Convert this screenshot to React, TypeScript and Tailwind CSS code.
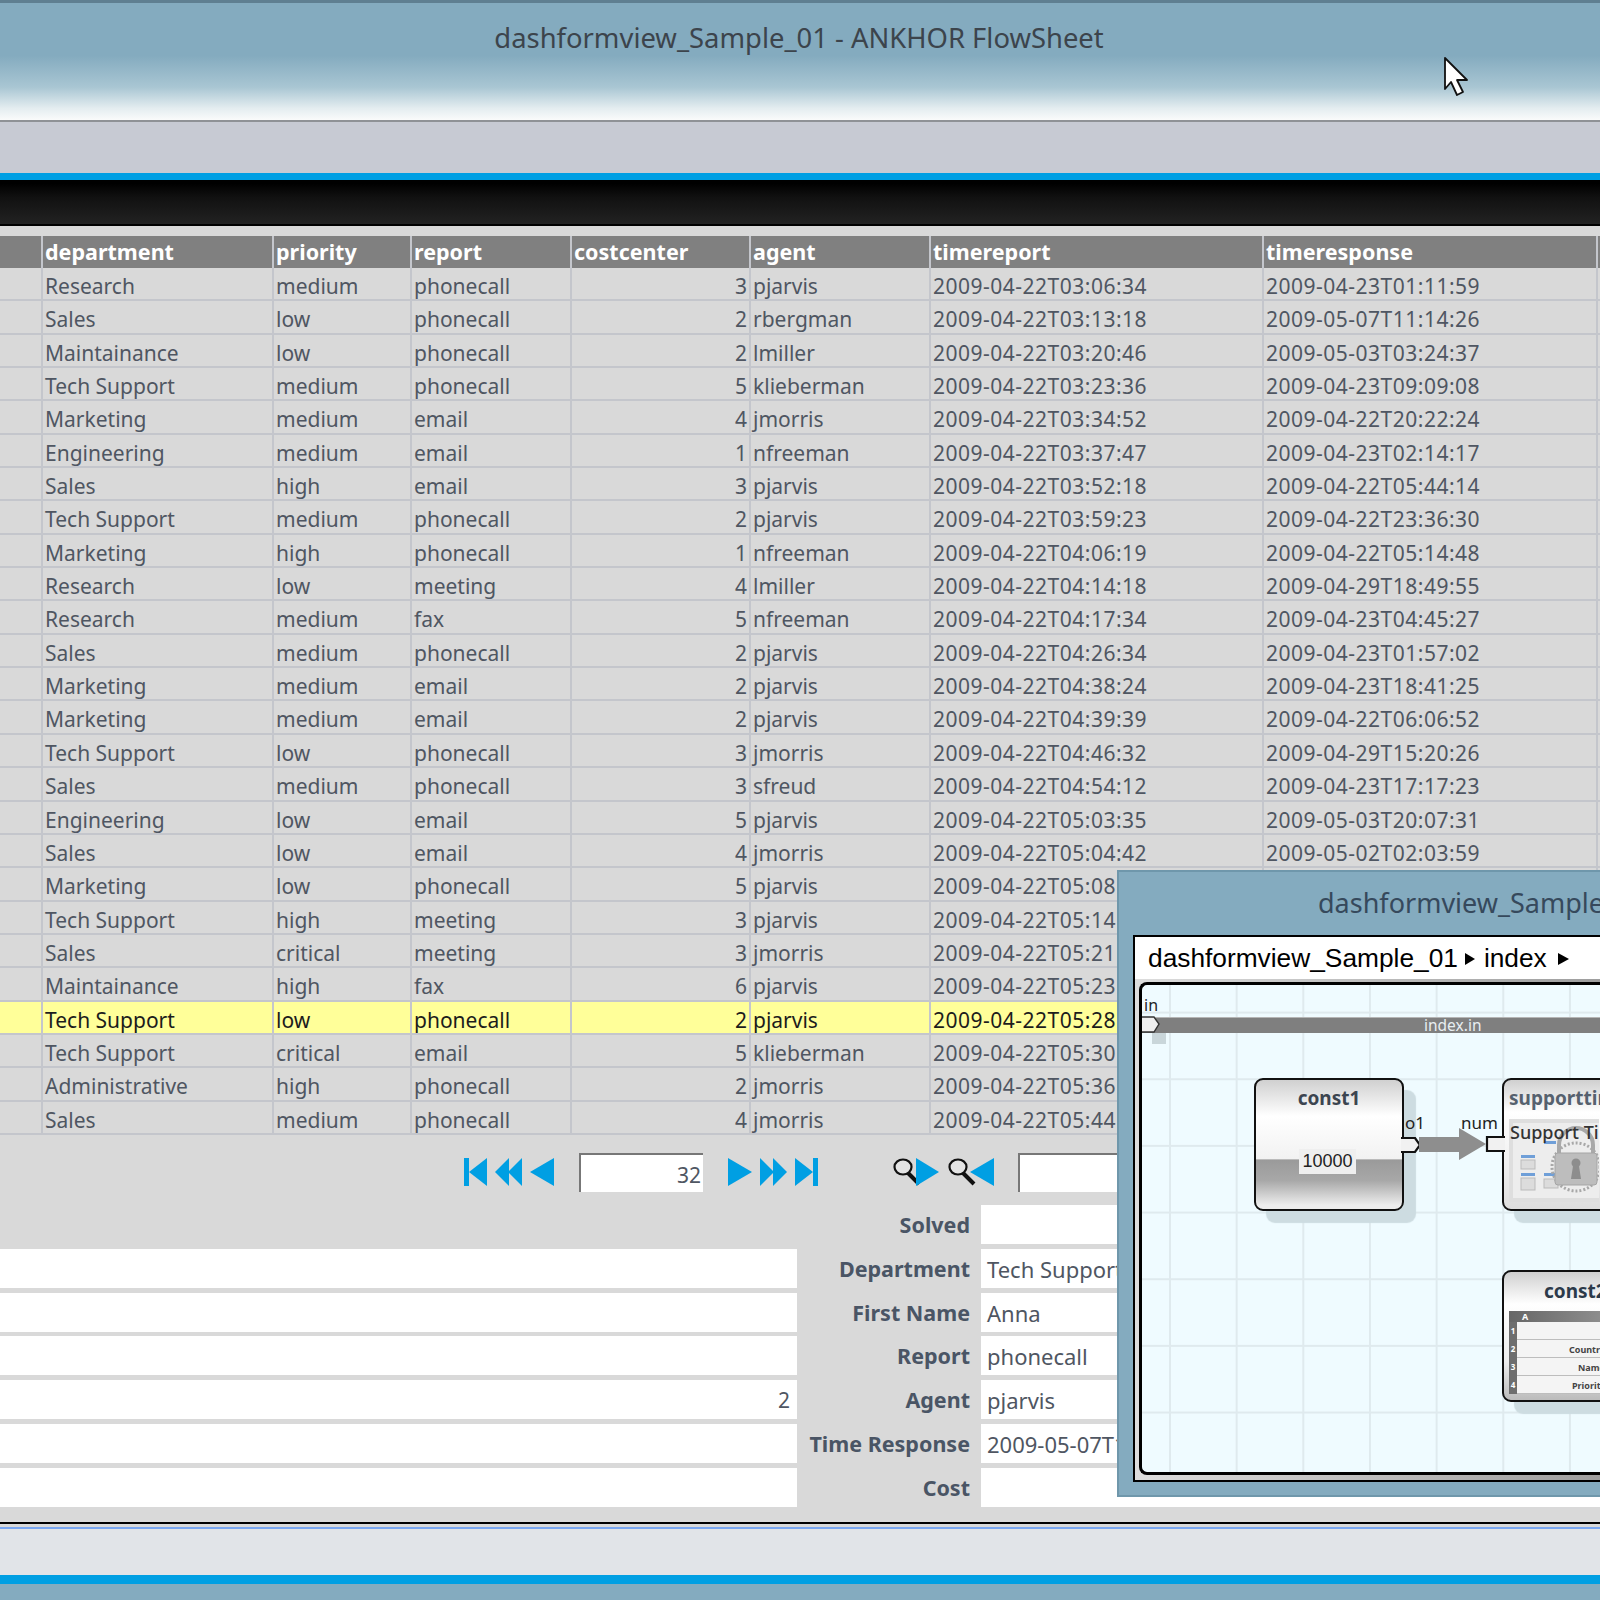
const COLS = [
  { w: "w-[43px]" },
  { w: "w-[231px]" },
  { w: "w-[138px]" },
  { w: "w-[160px]" },
  { w: "w-[179px]", right: true },
  { w: "w-[180px]" },
  { w: "w-[333px]", stamp: true },
  { w: "w-[334px]", stamp: true },
];

const HEADERS = ["", "department", "priority", "report", "costcenter", "agent", "timereport", "timeresponse"];

const ROWS: string[][] = [
  ["Research", "medium", "phonecall", "3", "pjarvis", "2009-04-22T03:06:34", "2009-04-23T01:11:59"],
  ["Sales", "low", "phonecall", "2", "rbergman", "2009-04-22T03:13:18", "2009-05-07T11:14:26"],
  ["Maintainance", "low", "phonecall", "2", "lmiller", "2009-04-22T03:20:46", "2009-05-03T03:24:37"],
  ["Tech Support", "medium", "phonecall", "5", "klieberman", "2009-04-22T03:23:36", "2009-04-23T09:09:08"],
  ["Marketing", "medium", "email", "4", "jmorris", "2009-04-22T03:34:52", "2009-04-22T20:22:24"],
  ["Engineering", "medium", "email", "1", "nfreeman", "2009-04-22T03:37:47", "2009-04-23T02:14:17"],
  ["Sales", "high", "email", "3", "pjarvis", "2009-04-22T03:52:18", "2009-04-22T05:44:14"],
  ["Tech Support", "medium", "phonecall", "2", "pjarvis", "2009-04-22T03:59:23", "2009-04-22T23:36:30"],
  ["Marketing", "high", "phonecall", "1", "nfreeman", "2009-04-22T04:06:19", "2009-04-22T05:14:48"],
  ["Research", "low", "meeting", "4", "lmiller", "2009-04-22T04:14:18", "2009-04-29T18:49:55"],
  ["Research", "medium", "fax", "5", "nfreeman", "2009-04-22T04:17:34", "2009-04-23T04:45:27"],
  ["Sales", "medium", "phonecall", "2", "pjarvis", "2009-04-22T04:26:34", "2009-04-23T01:57:02"],
  ["Marketing", "medium", "email", "2", "pjarvis", "2009-04-22T04:38:24", "2009-04-23T18:41:25"],
  ["Marketing", "medium", "email", "2", "pjarvis", "2009-04-22T04:39:39", "2009-04-22T06:06:52"],
  ["Tech Support", "low", "phonecall", "3", "jmorris", "2009-04-22T04:46:32", "2009-04-29T15:20:26"],
  ["Sales", "medium", "phonecall", "3", "sfreud", "2009-04-22T04:54:12", "2009-04-23T17:17:23"],
  ["Engineering", "low", "email", "5", "pjarvis", "2009-04-22T05:03:35", "2009-05-03T20:07:31"],
  ["Sales", "low", "email", "4", "jmorris", "2009-04-22T05:04:42", "2009-05-02T02:03:59"],
  ["Marketing", "low", "phonecall", "5", "pjarvis", "2009-04-22T05:08", ""],
  ["Tech Support", "high", "meeting", "3", "pjarvis", "2009-04-22T05:14", ""],
  ["Sales", "critical", "meeting", "3", "jmorris", "2009-04-22T05:21", ""],
  ["Maintainance", "high", "fax", "6", "pjarvis", "2009-04-22T05:23", ""],
  ["Tech Support", "low", "phonecall", "2", "pjarvis", "2009-04-22T05:28", ""],
  ["Tech Support", "critical", "email", "5", "klieberman", "2009-04-22T05:30", ""],
  ["Administrative", "high", "phonecall", "2", "jmorris", "2009-04-22T05:36", ""],
  ["Sales", "medium", "phonecall", "4", "jmorris", "2009-04-22T05:44", ""],
];

const SELECTED = 22;

const FORM = [
  { label: "Solved", value: "", left: null },
  { label: "Department", value: "Tech Support", left: "" },
  { label: "First Name", value: "Anna", left: "" },
  { label: "Report", value: "phonecall", left: "" },
  { label: "Agent", value: "pjarvis", left: "2" },
  { label: "Time Response", value: "2009-05-07T11:14:26", left: "" },
  { label: "Cost", value: "", left: "" },
];

function Tri({ points, w, className }: { points: string[]; w: number; className?: string }) {
  return (
    <svg width={w} height="28" viewBox={`0 0 ${w} 28`} className={`shrink-0 ${className ?? ""}`}>
      {points.map((p) => (
        <polygon key={p} points={p} fill="#009fe3" />
      ))}
    </svg>
  );
}

function Glass({ className }: { className?: string }) {
  return (
    <svg width="28" height="28" viewBox="0 0 28 28" className={`shrink-0 ${className ?? ""}`}>
      <ellipse cx="10" cy="9" rx="8.5" ry="7.5" fill="#e4e4e4" stroke="#111" strokeWidth="2.2" />
      <line x1="15" y1="15" x2="26" y2="26" stroke="#111" strokeWidth="4" />
    </svg>
  );
}

function Cursor() {
  return (
    <svg width="28" height="42" viewBox="0 0 28 42" className="absolute left-[1443px] top-[56px]">
      <path d="M2 2 V33 L8 26 L14 39 L20 36 L14 24 H24 Z" fill="#fff" stroke="#111" strokeWidth="1.8" strokeLinejoin="round" />
    </svg>
  );
}

function SupportThumb() {
  return (
    <svg width="90" height="83" viewBox="0 0 90 83" className="absolute left-0 top-0">
      <rect x="0" y="0" width="90" height="83" fill="#dedede" />
      <rect x="4" y="4" width="86" height="75" fill="#ededed" />
      <rect x="12" y="36" width="14" height="3" fill="#6f9fd8" />
      <rect x="12" y="41" width="14" height="9" fill="#dcdcdc" stroke="#bbb" />
      <rect x="12" y="54" width="14" height="3" fill="#6f9fd8" />
      <rect x="12" y="59" width="14" height="12" fill="#dcdcdc" stroke="#bbb" />
      <rect x="35" y="22" width="12" height="3" fill="#6f9fd8" />
      <rect x="35" y="54" width="12" height="3" fill="#6f9fd8" />
      <rect x="35" y="60" width="14" height="9" fill="#dcdcdc" stroke="#bbb" />
      <path d="M50 34 V26 a17 17 0 0 1 34 0 V34" fill="none" stroke="#a9a9a9" strokeWidth="4" />
      <circle cx="67" cy="48" r="24" fill="none" stroke="#a8a8a8" strokeWidth="3" strokeDasharray="2 2" />
      <rect x="46" y="34" width="42" height="32" rx="3" fill="#bdbdbd" stroke="#a5a5a5" />
      <circle cx="67" cy="44" r="4.5" fill="#8d8d8d" />
      <path d="M64 47 H70 L72 60 H62 Z" fill="#8d8d8d" />
    </svg>
  );
}

function Const2Table() {
  const rows = [
    { n: "1", text: "", cls: "" },
    { n: "2", text: "Country", cls: "ml-[52px]" },
    { n: "3", text: "Name", cls: "ml-[61px]" },
    { n: "4", text: "Priority", cls: "ml-[55px]" },
  ];
  return (
    <div className="absolute left-[5px] top-[39px] flex h-[83px] w-[120px] flex-col bg-[#e6e6e6]">
      <div className="h-[11px] shrink-0 bg-[linear-gradient(90deg,#666,#999)] pl-[13px] text-[9px] font-bold leading-[11px] text-white">A</div>
      {rows.map((r) => (
        <div key={r.n} className="flex min-h-0 flex-1">
          <div className="w-[8px] shrink-0 bg-[#6e6e6e] text-center text-[8px] font-bold leading-[18px] text-white">{r.n}</div>
          <div className="min-w-0 flex-1 overflow-hidden whitespace-nowrap border-b border-[#bdbdbd] bg-[#f4f4f4] text-[9px] font-bold leading-[20px] text-[#444]">
            <span className={r.cls}>{r.text}</span>
          </div>
        </div>
      ))}
    </div>
  );
}

function FlowWindow() {
  return (
    <div className="absolute left-[1117px] top-[870px] h-[627px] w-[520px] border-2 border-[#6f97ab] bg-[#84abbf]">
      <div className="whitespace-nowrap pl-[199px] pt-[12px] text-[27px] leading-[38px] text-[#36495c]">dashformview_Sample_01</div>
      <div className="ml-[14px] mt-[13px] h-[547px] border-2 border-r-0 border-black bg-white">
        <div className="flex h-[42px] items-center whitespace-nowrap pl-[13px] pt-[1px] font-['Liberation_Sans',sans-serif] text-[26.3px] text-black">
          dashformview_Sample_01
          <span className="ml-[7px] mr-[9px] h-0 w-0 border-y-[6px] border-l-[10px] border-y-transparent border-l-black" />
          index
          <span className="ml-[11px] h-0 w-0 border-y-[6px] border-l-[11px] border-y-transparent border-l-black" />
        </div>
        <div className="h-[501px] bg-[linear-gradient(90deg,#ddd,#999)] pl-[4px] pt-[3px]">
          <div className="relative h-[493px] overflow-hidden rounded-l-[8px] border-y-[3px] border-l-[3px] border-black bg-[#effbff] bg-[linear-gradient(#dfeaee_2px,transparent_2px),linear-gradient(90deg,#dfeaee_2px,transparent_2px)] bg-[length:66.67px_66.67px] bg-[position:27px_26.6px] font-['Noto_Sans',sans-serif]">
            <div className="absolute left-[2px] top-[8px] text-[16px] leading-[24px] text-[#222]">in</div>
            <div className="absolute left-0 top-[32px] h-[16px] w-[480px] border-t border-[#b5b5b5] bg-[#7f7f7f] pl-[282px] text-[15.5px] leading-[15px] text-[#e8eef2]">index.in</div>
            <div className="absolute left-[10px] top-[48px] h-[11px] w-[14px] bg-[#c9d6da]" />
            <svg width="24" height="20" viewBox="0 0 24 20" className="absolute left-[-3px] top-[30px]">
              <path d="M0 2 H15 L20 9 L15 17 H0 Z" fill="#efefef" stroke="#333" strokeWidth="1.4" />
            </svg>

            {/* const1 */}
            <div className="absolute left-[112px] top-[93px] h-[133px] w-[150px] rounded-[9px] border-[2.5px] border-[#111] bg-[linear-gradient(#d0d0d0_0%,#fff_28%,#f2f2f2_61%,#9a9a9a_62%,#a8a8a8_78%,#ededed_97%)] shadow-[12px_12px_1px_#cddce1]">
              <div className="pt-[4px] text-center text-[19px] font-bold leading-[28px] text-[#3c4550]">const1</div>
              <div className="absolute left-[43px] top-[69px] h-[25px] w-[57px] bg-[#efefef] text-center font-['Liberation_Sans',sans-serif] text-[18px] leading-[25px] text-[#222]">10000</div>
              <svg width="20" height="17" viewBox="0 0 20 17" className="absolute left-[145px] top-[57px]">
                <path d="M0 1 H14 L19 8 L14 15 H0" fill="#f1f1f1" stroke="#111" strokeWidth="2.2" />
              </svg>
            </div>
            <div className="absolute left-[263px] top-[126px] text-[17px] leading-[24px] text-[#222]">o1</div>
            <div className="absolute left-[319px] top-[126px] text-[17px] leading-[24px] text-[#222]">num</div>
            <svg width="68" height="32" viewBox="0 0 68 32" className="absolute left-[277px] top-[143px]">
              <polygon points="0,9 40,9 40,0 67,16 40,32 40,24 0,24" fill="#8e8e8e" />
            </svg>

            {/* supporttime */}
            <div className="absolute left-[360px] top-[93px] h-[133px] w-[200px] rounded-[9px] border-[2.5px] border-[#111] bg-[linear-gradient(#d0d0d0_0%,#fff_25%,#eee_70%,#ddd_100%)] shadow-[12px_12px_1px_#cddce1]">
              <div className="pl-[5px] pt-[4px] text-[19px] font-bold leading-[28px] text-[#56616e]">supporttime</div>
              <div className="absolute left-[5px] top-[39px] h-[83px] w-[90px] overflow-hidden">
                <SupportThumb />
                <div className="absolute left-[1px] top-0 whitespace-nowrap text-[18px] font-medium leading-[26px] text-[#333]">Support Time</div>
              </div>
              <svg width="20" height="17" viewBox="0 0 20 17" className="absolute left-[-19px] top-[56px]">
                <path d="M20 1 H2 V15 H20" fill="#f1f1f1" stroke="#111" strokeWidth="2.2" />
              </svg>
            </div>

            {/* const2 */}
            <div className="absolute left-[360px] top-[285px] h-[132px] w-[200px] rounded-[9px] border-[2.5px] border-[#111] bg-[linear-gradient(#d0d0d0_0%,#fff_25%,#eee_70%,#bbb_100%)] shadow-[12px_12px_1px_#cddce1]">
              <div className="pl-[40px] pt-[5px] text-[19px] font-bold leading-[28px] text-[#2c3a4a]">const2</div>
              <Const2Table />
            </div>
          </div>
        </div>
      </div>
    </div>
  );
}

export default function App() {
  return (
    <div className="relative flex h-[1600px] w-[1600px] flex-col overflow-hidden bg-[#d9d9d9] font-['Noto_Sans',sans-serif] text-[21px] text-[#4f5662]">
      {/* title bar */}
      <div className="h-[120px] shrink-0 border-t-[3px] border-[#5f7f91] bg-[linear-gradient(#84abbf_0%,#84abbf_45%,#a9c6d3_72%,#e4edf0_90%,#fafbfb_100%)] pr-[2px] text-center">
        <div className="pt-[15px] text-[27.4px] leading-[40px] text-[#3c444c]">dashformview_Sample_01 - ANKHOR FlowSheet</div>
      </div>
      <div className="h-[53px] shrink-0 border-t-2 border-[#8f9296] bg-[#c7cad3]" />
      <div className="h-[7px] shrink-0 bg-[#009fe3]" />
      <div className="h-[46px] shrink-0 border-b-2 border-black bg-[linear-gradient(#000_8%,#111_40%,#222)]" />

      {/* table */}
      <div className="mt-[10px] shrink-0">
        <div className="flex h-[32px] bg-[#808080] text-[21.5px] font-bold leading-[32px] text-white">
          {HEADERS.map((h, i) => (
            <div key={i} className={`${COLS[i].w} border-r-2 border-[#c4c6cc] pl-[2px]`}>
              {h}
            </div>
          ))}
        </div>
        {ROWS.map((row, r) => (
          <div
            key={r}
            className={`flex h-[33.35px] border-b-2 border-[#c4c6cc] leading-[37px] ${
              r === SELECTED ? "bg-[#ffff99] text-[#1c1c1c]" : ""
            }`}
          >
            {["", ...row].map((c, i) => (
              <div
                key={i}
                className={`${COLS[i].w} whitespace-nowrap border-r-2 border-[#c4c6cc] pl-[2px] pr-[2px] ${
                  COLS[i].right ? "text-right" : ""
                } ${COLS[i].stamp ? "tracking-[0.5px]" : ""}`}
              >
                {c}
              </div>
            ))}
          </div>
        ))}
      </div>

      {/* pager */}
      <div className="mt-[18px] flex h-[39px] shrink-0 items-center">
        <Tri className="ml-[464px]" w={23} points={["0,0 5,0 5,28 0,28", "5,14 23,0 23,28"]} />
        <Tri className="ml-[8px]" w={27} points={["0,14 14,0 14,28", "13,14 27,0 27,28"]} />
        <Tri className="ml-[8px]" w={24} points={["0,14 24,0 24,28"]} />
        <div className="ml-[25px] h-[39px] w-[124px] border-l-2 border-t-2 border-[#777] bg-white pr-[2px] text-right leading-[40px]">32</div>
        <Tri className="ml-[25px]" w={24} points={["0,0 24,14 0,28"]} />
        <Tri className="ml-[8px]" w={27} points={["0,0 14,14 0,28", "13,0 27,14 13,28"]} />
        <Tri className="ml-[8px]" w={23} points={["0,0 18,14 0,28", "18,0 23,0 23,28 18,28"]} />
        <Glass className="ml-[75px]" />
        <Tri className="ml-[-5px]" w={23} points={["0,0 23,14 0,28"]} />
        <Glass className="ml-[9px]" />
        <Tri className="ml-[-6px]" w={24} points={["0,14 24,0 24,28"]} />
        <div className="ml-[24px] h-[39px] w-[150px] border-l-2 border-t-2 border-[#777] bg-white" />
      </div>

      {/* record form */}
      <div className="mt-[13px] flex shrink-0 flex-col gap-[4.8px]">
        {FORM.map((f) => (
          <div key={f.label} className="flex h-[39px] leading-[40px]">
            <div className={`w-[797px] shrink-0 pr-[7px] text-right ${f.left === null ? "" : "bg-white"}`}>{f.left}</div>
            <div className="w-[173px] shrink-0 whitespace-nowrap text-right text-[21.5px] font-bold text-[#4a5565]">{f.label}</div>
            <div className="ml-[11px] flex-1 whitespace-nowrap bg-white pl-[6px] text-[22px]">{f.value}</div>
          </div>
        ))}
      </div>

      {/* status bar */}
      <div className="mt-[15px] h-[2px] shrink-0 bg-black" />
      <div className="mt-[3px] h-[48px] shrink-0 border-t-2 border-[#7aa7f0] bg-[#e1e4e8]" />
      <div className="h-[9px] shrink-0 bg-[#009fe3]" />
      <div className="flex-1 bg-[#84abbf]" />

      <FlowWindow />
      <Cursor />
    </div>
  );
}
